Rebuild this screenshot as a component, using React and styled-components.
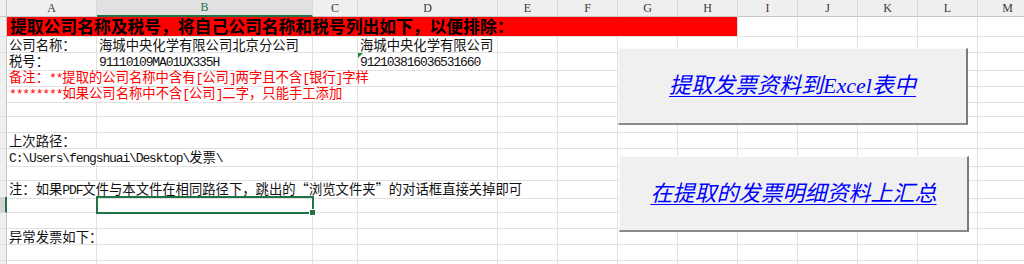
import React from "react";
import styled, { createGlobalStyle, css } from "styled-components";

const GlobalStyle = createGlobalStyle`
  html, body {
    margin: 0;
    padding: 0;
    background: #ffffff;
  }
  #root {
    width: 1024px;
    height: 264px;
    overflow: hidden;
  }
`;

const COLS = ["A", "B", "C", "D", "E", "F", "G", "H", "I", "J", "K", "L", "M"];
const TEMPLATE = "7px 90px 216px 45px 140px repeat(9, 60px)";
const GRID = "#e1e1e1";
const GREEN = "#217346";
const RED = "#ff0000";

const Sheet = styled.div`
  position: relative;
  width: 1024px;
  height: 264px;
  overflow: hidden;
  font-family: "Noto Sans CJK SC", sans-serif;
  font-size: 13.33px;
  color: #111;
`;

const HeaderRow = styled.div`
  display: grid;
  grid-template-columns: ${TEMPLATE};
  height: 17px;
  background: #efefef;
  border-bottom: 1px solid #c6c6c6;
  box-sizing: border-box;
`;

const Corner = styled.div`
  border-right: 1px solid #c6c6c6;
`;

const ColHead = styled.div`
  box-sizing: border-box;
  border-right: 1px solid #d9d9d9;
  text-align: center;
  font-family: "Liberation Serif", serif;
  font-size: 12px;
  line-height: 17px;
  color: #3a3a3a;
  ${(p) =>
    p.$active &&
    css`
      background: #e1e1e1;
      color: ${GREEN};
      border-bottom: 2px solid ${GREEN};
      line-height: 15px;
    `}
`;

const RowWrap = styled.div`
  display: grid;
  grid-template-columns: ${TEMPLATE};
  height: ${(p) => p.$h}px;
`;

const RowHead = styled.div`
  box-sizing: border-box;
  background: ${(p) => (p.$active ? "#d4d4d4" : "#efefef")};
  border-right: ${(p) => (p.$active ? `2px solid ${GREEN}` : "1px solid #c6c6c6")};
  border-bottom: 1px solid #dcdcdc;
`;

const Cell = styled.div`
  position: relative;
  box-sizing: border-box;
  grid-column: span ${(p) => p.$span || 1};
  border-right: 1px solid ${GRID};
  border-bottom: 1px solid ${GRID};
  padding-left: ${(p) => p.$pad ?? 2}px;
  white-space: nowrap;
  line-height: ${(p) => p.$h - 1}px;
  color: ${(p) => p.$color || "#111"};
  background: ${(p) => p.$bg || "transparent"};
  font-size: ${(p) => p.$size || 13.33}px;
  font-weight: ${(p) => (p.$bold ? 700 : 400)};
  ${(p) =>
    p.$selected &&
    css`
      outline: 2px solid ${GREEN};
      outline-offset: -1px;
      z-index: 1;
      &::after {
        content: "";
        position: absolute;
        right: -4px;
        bottom: -4px;
        width: 5px;
        height: 5px;
        background: ${GREEN};
        border: 1px solid #fff;
      }
    `}
  ${(p) =>
    p.$flag &&
    css`
      &::before {
        content: "";
        position: absolute;
        left: 0;
        top: 0;
        border-top: 5px solid #1e8a3e;
        border-right: 5px solid transparent;
      }
    `}
`;

const Half = styled.span`
  font-family: "Liberation Mono", monospace;
  font-size: 13px;
  letter-spacing: -1.13px;
`;

const FloatButton = styled.div`
  position: absolute;
  left: ${(p) => p.$x}px;
  top: ${(p) => p.$y}px;
  width: ${(p) => p.$w}px;
  height: ${(p) => p.$h}px;
  box-sizing: border-box;
  background: #f0f0f0;
  border-top: 1px solid #fafafa;
  border-left: 1px solid #fafafa;
  border-right: 2px solid #7a7a7a;
  border-bottom: 2px solid #8a8a8a;
  display: flex;
  align-items: center;
  justify-content: center;
  z-index: 2;
`;

const ButtonLabel = styled.span`
  font-family: "Liberation Serif", "Noto Sans CJK SC", serif;
  font-style: italic;
  font-size: 22px;
  color: #0000ff;
  text-decoration: underline;
  text-decoration-thickness: 1px;
  text-underline-offset: 3px;
  line-height: 1;
`;

// split a string into half-width (ascii) and full-width runs
function Txt({ children }) {
  const parts = String(children).split(/([\x20-\x7e]+)/).filter(Boolean);
  return parts.map((part, i) =>
    /^[\x20-\x7e]+$/.test(part) ? <Half key={i}>{part}</Half> : <span key={i}>{part}</span>
  );
}

function Row({ height = 16, active, cells = [] }) {
  const out = [];
  let c = 0;
  while (c < COLS.length) {
    const cell = cells.find((x) => x.col === c);
    if (cell) {
      const span = cell.span || 1;
      out.push(
        <Cell
          key={c}
          $h={height}
          $span={span}
          $color={cell.color}
          $bg={cell.bg}
          $bold={cell.bold}
          $size={cell.size}
          $pad={cell.pad}
          $selected={cell.selected}
          $flag={cell.flag}
        >
          {cell.text ? <Txt>{cell.text}</Txt> : null}
        </Cell>
      );
      c += span;
    } else {
      out.push(<Cell key={c} $h={height} />);
      c += 1;
    }
  }
  return (
    <RowWrap $h={height}>
      <RowHead $active={active} />
      {out}
    </RowWrap>
  );
}

const rows = [
  {
    height: 20,
    cells: [
      {
        col: 0,
        span: 8,
        bg: RED,
        bold: true,
        size: 16.8,
        pad: 3,
        color: "#000",
        text: "提取公司名称及税号，将自己公司名称和税号列出如下，以便排除：",
      },
    ],
  },
  {
    cells: [
      { col: 0, text: "公司名称：" },
      { col: 1, text: "海城中央化学有限公司北京分公司" },
      { col: 3, text: "海城中央化学有限公司" },
    ],
  },
  {
    cells: [
      { col: 0, text: "税号：" },
      { col: 1, text: "91110109MA01UX335H" },
      { col: 3, text: "912103816036531660", flag: true },
    ],
  },
  {
    cells: [
      { col: 0, span: 4, color: RED, text: "备注：**提取的公司名称中含有[公司]两字且不含[银行]字样" },
    ],
  },
  {
    cells: [{ col: 0, span: 3, color: RED, text: "********如果公司名称中不含[公司]二字，只能手工添加" }],
  },
  { cells: [] },
  { cells: [] },
  { cells: [{ col: 0, text: "上次路径：" }] },
  { cells: [{ col: 0, span: 2, text: "C:\\Users\\fengshuai\\Desktop\\发票\\" }] },
  { cells: [] },
  {
    cells: [
      { col: 0, span: 5, text: "注：如果PDF文件与本文件在相同路径下，跳出的“浏览文件夹”的对话框直接关掉即可" },
    ],
  },
  { active: true, cells: [{ col: 1, selected: true }] },
  { cells: [] },
  { cells: [{ col: 0, text: "异常发票如下：" }] },
  { cells: [] },
  { cells: [] },
];

export default function App() {
  return (
    <>
      <GlobalStyle />
      <Sheet>
        <HeaderRow>
          <Corner />
          {COLS.map((c) => (
            <ColHead key={c} $active={c === "B"}>
              {c}
            </ColHead>
          ))}
        </HeaderRow>
        {rows.map((r, i) => (
          <Row key={i} height={r.height} active={r.active} cells={r.cells} />
        ))}
        <FloatButton $x={618} $y={48} $w={350} $h={77}>
          <ButtonLabel>提取发票资料到Excel表中</ButtonLabel>
        </FloatButton>
        <FloatButton $x={619} $y={156} $w={350} $h={76}>
          <ButtonLabel>在提取的发票明细资料上汇总</ButtonLabel>
        </FloatButton>
      </Sheet>
    </>
  );
}
